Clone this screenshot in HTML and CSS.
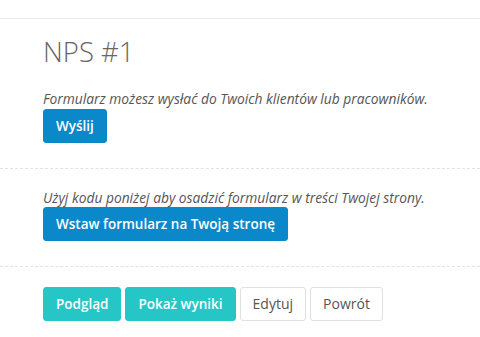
FILE: index.html
```html
<!DOCTYPE html>
<html lang="pl">
<head>
  <meta charset="UTF-8">
  <meta name="viewport" content="width=device-width, initial-scale=1.0">
  <title>NPS #1</title>
  <link rel="stylesheet" href="styles.css">
</head>
<body>
  <div class="top-bar"></div>
  <div class="panel">
    <div class="section">
      <h1 class="title">NPS #1</h1>
      <p class="hint">Formularz możesz wysłać do Twoich klientów lub pracowników.</p>
      <button class="btn btn-primary">Wyślij</button>
    </div>
    <div class="section">
      <p class="hint">Użyj kodu poniżej aby osadzić formularz w treści Twojej strony.</p>
      <button class="btn btn-primary">Wstaw formularz na Twoją stronę</button>
    </div>
    <div class="section last">
      <div class="actions">
        <button class="btn btn-info">Podgląd</button>
        <button class="btn btn-info">Pokaż wyniki</button>
        <button class="btn btn-default">Edytuj</button>
        <button class="btn btn-default">Powrót</button>
      </div>
    </div>
  </div>
</body>
</html>
```

FILE: styles.css
```css
body {
  margin: 0;
  background: #fff;
  color: #555;
  font-family: "Open Sans", "Liberation Sans", sans-serif;
  font-size: 13px;
  line-height: 1.42857;
}
.top-bar {
  height: 18px;
  border-bottom: 1px solid #e8e8e8;
}
.section {
  padding: 20px 43px 25px;
  border-bottom: 1px dashed #e2e2e2;
}
.section:first-child {
  padding-top: 0;
}
.section.last {
  border-bottom: none;
}
.title {
  margin: 18px 0 23px;
  font-size: 27.5px;
  font-weight: 300;
  line-height: 30px;
  color: #666;
}
.hint {
  margin: 0;
  font-size: 13.8px;
  line-height: 18.5px;
  font-style: italic;
  color: #555;
}
.btn {
  display: inline-block;
  padding: 6px 12px;
  font-family: inherit;
  font-size: 13.5px;
  font-weight: 600;
  line-height: 20px;
  border: 1px solid transparent;
  border-radius: 3px;
  cursor: pointer;
}
.btn-primary {
  background: #0a88c9;
  border-color: #0a88c9;
  color: #fff;
}
.btn-info {
  background: #26c6c6;
  border-color: #26c6c6;
  color: #fff;
}
.btn-default {
  background: #fff;
  border-color: #e0e0e0;
  color: #555;
  font-size: 14px;
  font-weight: 500;
}
.actions {
  display: flex;
  gap: 4px;
}
```
